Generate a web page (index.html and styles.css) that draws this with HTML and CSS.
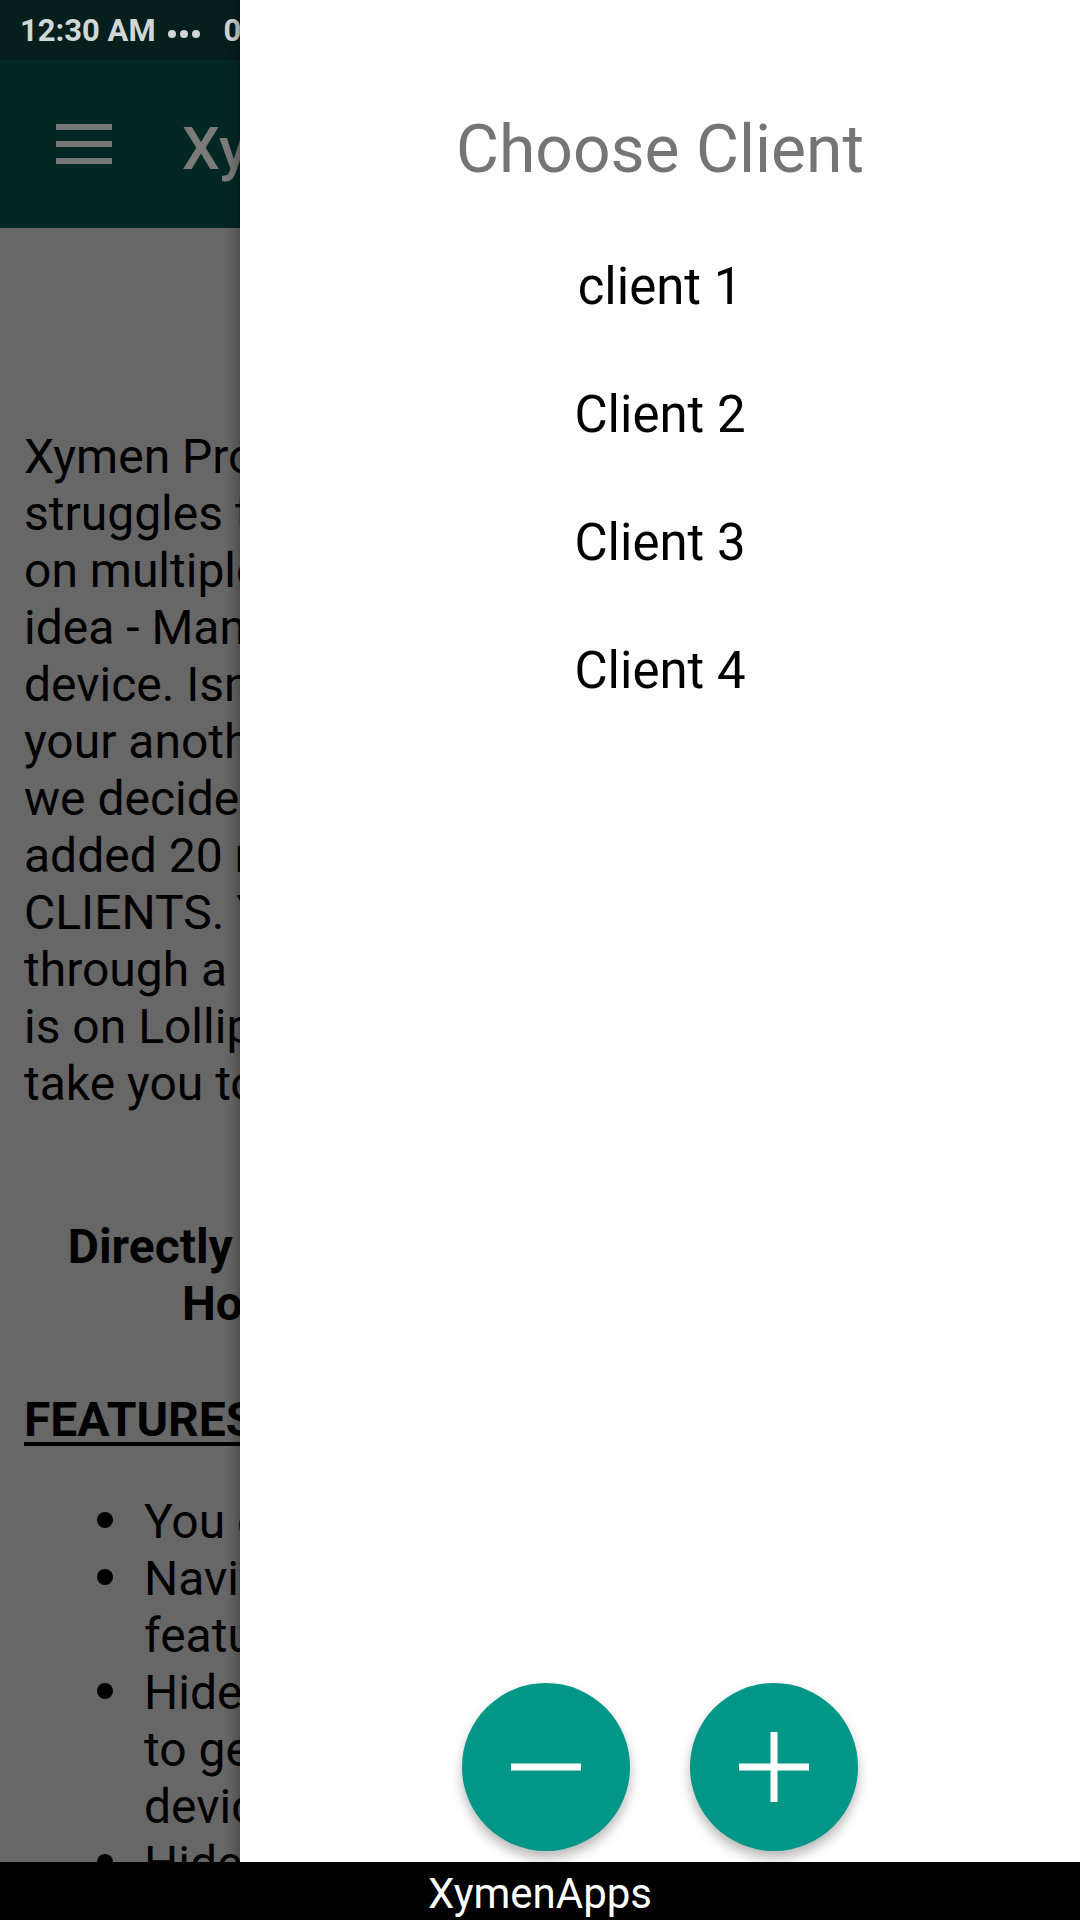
FILE: index.html
```html
<!DOCTYPE html>
<html lang="en">
<head>
<meta charset="UTF-8">
<meta name="viewport" content="width=device-width, initial-scale=1.0">
<title>Xymen Pro</title>
<link rel="stylesheet" href="styles.css">
</head>
<body>

<div class="screen">
    <div class="main">
        <div class="page">
            <div class="status-bar">
                <span class="clock">12:30 AM</span>
                <svg class="more-dots" width="32" height="10" viewBox="0 0 32 10">
                    <circle cx="4" cy="5" r="4"/>
                    <circle cx="16" cy="5" r="4"/>
                    <circle cx="28" cy="5" r="4"/>
                </svg>
                <span class="speed">0.05K/s</span>
            </div>

            <header class="app-bar">
                <div class="hamburger">
                    <span></span>
                    <span></span>
                    <span></span>
                </div>
                <h1 class="app-title">Xymen Pro</h1>
            </header>

            <div class="content">
                <p class="intro">
                    Xymen Pro is made for everyone who<br>
                    struggles to manage their accounts<br>
                    on multiple devices. So we got an<br>
                    idea - Manage everything on a single<br>
                    device. Isn't it great to open<br>
                    your another account in a moment? So<br>
                    we decided to build this app and<br>
                    added 20 realtime (working)<br>
                    CLIENTS. You can switch between them<br>
                    through a navigation drawer. If your phone<br>
                    is on Lollipop or above, the app will<br>
                    take you to the clients directly.
                </p>

                <p class="highlight">
                    Directly Launch Every Client From Your Own<br>
                    Home Screen By Using Shortcuts
                </p>

                <p class="features-title">FEATURES</p>

                <ul class="features">
                    <li>You can use up to 20 clients.</li>
                    <li>Navigation drawer to switch clients,<br>features always one tap away.</li>
                    <li>Hide the notification of any client<br>to get more space on your<br>device screen.</li>
                    <li>Hide clients you do not use.</li>
                </ul>
            </div>
        </div>

        <aside class="drawer">
            <h2 class="drawer-title">Choose Client</h2>
            <ul class="client-list">
                <li>client 1</li>
                <li>Client 2</li>
                <li>Client 3</li>
                <li>Client 4</li>
            </ul>
            <div class="fab-row">
                <button class="fab" aria-label="Remove client">
                    <svg width="70" height="70" viewBox="0 0 70 70">
                        <rect x="0" y="31.5" width="70" height="7" fill="#fff"/>
                    </svg>
                </button>
                <button class="fab" aria-label="Add client">
                    <svg width="70" height="70" viewBox="0 0 70 70">
                        <rect x="0" y="31.5" width="70" height="7" fill="#fff"/>
                        <rect x="31.5" y="0" width="7" height="70" fill="#fff"/>
                    </svg>
                </button>
            </div>
        </aside>
    </div>

    <footer class="ad-bar">XymenApps</footer>
</div>

</body>
</html>
```

FILE: styles.css
```css
body {
    margin: 0;
    font-family: Roboto, "Noto Sans", "Liberation Sans", sans-serif;
}
.screen {
    width: 1080px;
    height: 1920px;
    display: flex;
    flex-direction: column;
    overflow: hidden;
}
.main {
    flex: 1;
    position: relative;
    overflow: hidden;
}
.page {
    height: 100%;
    display: flex;
    flex-direction: column;
}
.status-bar {
    height: 60px;
    flex-shrink: 0;
    background-color: #041f1c;
    color: #d0d8d7;
    display: flex;
    align-items: center;
    padding-left: 20px;
    font-size: 31px;
    font-weight: bold;
    white-space: nowrap;
}
.more-dots {
    fill: #d0d8d7;
    margin: 8px 0 0 12px;
}
.speed {
    margin-left: 24px;
}
.app-bar {
    height: 168px;
    flex-shrink: 0;
    background-color: #032824;
    display: flex;
    align-items: center;
}
.hamburger {
    width: 56px;
    margin-left: 56px;
    display: flex;
    flex-direction: column;
    gap: 11px;
}
.hamburger span {
    display: block;
    height: 6px;
    background-color: #777;
}
.app-title {
    margin: 8px 0 0 70px;
    font-size: 60px;
    font-weight: 500;
    color: #7a7a7a;
    white-space: nowrap;
}
.content {
    flex: 1;
    background-color: #676767;
    color: #000;
    padding: 200px 24px 0;
    font-size: 48px;
    line-height: 57px;
    overflow: hidden;
}
.content p {
    margin: 0;
    white-space: nowrap;
}
.highlight {
    margin-top: 106px !important;
    text-align: center;
    font-weight: bold;
}
.features-title {
    margin-top: 59px !important;
    font-weight: bold;
    text-decoration: underline;
    text-underline-offset: 6px;
}
.features {
    list-style-type: none;
    margin: 45px 0 0;
    padding-left: 120px;
    white-space: nowrap;
}
.features li::before {
    content: "";
    display: inline-block;
    width: 16px;
    height: 16px;
    border-radius: 50%;
    background-color: #000;
    margin-left: -47px;
    margin-right: 31px;
    vertical-align: 10px;
}
.drawer {
    position: absolute;
    top: 0;
    left: 240px;
    right: 0;
    bottom: 0;
    background-color: #fff;
    box-shadow: -3px 0 12px rgba(0, 0, 0, 0.35);
    display: flex;
    flex-direction: column;
    align-items: center;
}
.drawer-title {
    margin: 110px 0 0;
    font-size: 66px;
    line-height: 80px;
    font-weight: normal;
    color: #757575;
}
.client-list {
    list-style-type: none;
    margin: 33px 0 0;
    padding: 0;
    text-align: center;
    font-size: 51px;
    line-height: 128px;
    color: #000;
}
.fab-row {
    margin-top: auto;
    padding-bottom: 11px;
    display: flex;
    gap: 60px;
}
.fab {
    width: 168px;
    height: 168px;
    border: none;
    border-radius: 50%;
    background-color: #009688;
    box-shadow: 0 7px 12px rgba(0, 0, 0, 0.28);
    display: flex;
    align-items: center;
    justify-content: center;
    padding: 0;
}
.ad-bar {
    height: 58px;
    flex-shrink: 0;
    background-color: #000;
    color: #fff;
    font-size: 42px;
    line-height: 58px;
    padding-top: 3px;
    box-sizing: border-box;
    text-align: center;
}
```
